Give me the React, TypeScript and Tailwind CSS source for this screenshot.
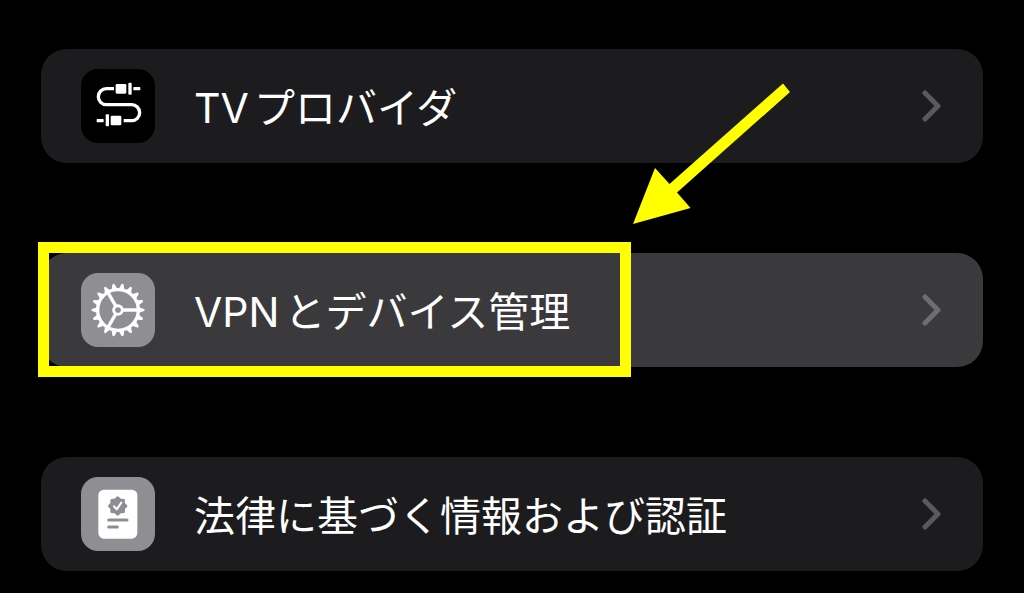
import type { ReactNode } from "react";

function CableIcon() {
  return (
    <svg viewBox="35 28 222 222" className="size-full" aria-hidden="true">
      <path
        d="M134 87H111a24 24 0 0 0 0 48h76a24 24 0 0 1 0 48h-24"
        fill="none"
        stroke="#fff"
        strokeWidth="10"
      />
      <g fill="#fff">
        <rect x="139" y="73" width="32" height="29" rx="4" />
        <rect x="177" y="69" width="10" height="36" rx="3" />
        <rect x="192" y="82" width="21" height="10" rx="2" />
        <rect x="124" y="168" width="32" height="29" rx="4" />
        <rect x="109" y="164" width="10" height="36" rx="3" />
        <rect x="82" y="178" width="21" height="10" rx="2" />
      </g>
    </svg>
  );
}

const TEETH = Array.from({ length: 18 }, (_, i) => i * 20);

function GearIcon() {
  return (
    <svg viewBox="-111 -111 222 222" className="size-full" aria-hidden="true">
      <g fill="#fff">
        {TEETH.map((angle) => (
          <path
            key={angle}
            d="M60 -10L67 -7L76 -4Q80 -3 80 0Q80 3 76 4L67 7L60 10Z"
            transform={`rotate(${angle})`}
          />
        ))}
      </g>
      <g fill="none" stroke="#fff">
        <circle r="61" strokeWidth="10" />
        <circle r="13" strokeWidth="9" />
        {[0, 120, 240].map((angle) => (
          <path key={angle} d="M15 0H60" strokeWidth="10" transform={`rotate(${angle})`} />
        ))}
      </g>
    </svg>
  );
}

const LOBES = Array.from({ length: 8 }, (_, i) => i * 45);

function CertificateIcon() {
  return (
    <svg viewBox="35 28 222 222" className="size-full" aria-hidden="true">
      <rect x="87" y="66" width="117" height="147" rx="17" fill="#fff" />
      <g fill="#8e8e93" transform="translate(145 115)">
        <circle r="23" />
        {LOBES.map((angle) => (
          <path
            key={angle}
            d="M17 -13L27 -4Q31 0 27 4L17 13Z"
            transform={`rotate(${angle})`}
          />
        ))}
      </g>
      <path
        d="M134 116L142 125L156 105"
        fill="none"
        stroke="#fff"
        strokeWidth="6"
        strokeLinecap="round"
        strokeLinejoin="round"
      />
      <path d="M118 157H173M118 178H144" stroke="#8e8e93" strokeWidth="9" strokeLinecap="round" />
    </svg>
  );
}

function Chevron({ color }: { color: string }) {
  return (
    <svg viewBox="0 0 20 32" className={`h-8 w-5 shrink-0 ${color}`} fill="none" aria-hidden="true">
      <path
        d="M3 3L16 16L3 29"
        stroke="currentColor"
        strokeWidth="5"
        strokeLinecap="round"
        strokeLinejoin="round"
      />
    </svg>
  );
}

type RowProps = {
  label: string;
  icon: ReactNode;
  iconBg: string;
  rowBg?: string;
  chevron?: string;
};

function SettingsRow({
  label,
  icon,
  iconBg,
  rowBg = "bg-[#1c1c1e]",
  chevron = "text-[#5a5a5e]",
}: RowProps) {
  return (
    <button
      type="button"
      className={`flex w-full items-center gap-[39px] rounded-[26px] py-5 pr-[41px] pl-10 text-left ${rowBg}`}
    >
      <span className={`size-[74px] shrink-0 overflow-hidden rounded-[17px] ${iconBg}`}>{icon}</span>
      <span className="grow pt-1 text-[41px] leading-[60px] whitespace-nowrap text-white">{label}</span>
      <Chevron color={chevron} />
    </button>
  );
}

export default function App() {
  return (
    <main className="min-h-screen bg-black px-[41px] pt-[49px] pb-5 font-['Inter','Noto_Sans_CJK_JP',sans-serif] [text-autospace:normal]">
      <ul className="flex flex-col gap-[90px]">
        <li>
          <SettingsRow label="TVプロバイダ" icon={<CableIcon />} iconBg="bg-black" />
        </li>
        <li className="relative">
          <SettingsRow
            label="VPNとデバイス管理"
            icon={<GearIcon />}
            iconBg="bg-[#8e8e93]"
            rowBg="bg-[#3a3a3c]"
            chevron="text-[#6e6e72]"
          />
          <div className="pointer-events-none absolute -top-[11px] -bottom-[10px] -left-[3px] w-[593px] border-[11px] border-[#ffff00]" />
          <svg
            viewBox="0 0 158 142"
            className="pointer-events-none absolute -top-[170px] left-[592px] h-[142px] w-[158px]"
            aria-hidden="true"
          >
            <path d="M0 141L22 85L36.500 101L150 0.500L157 9L44 109.500L57.500 125Z" fill="#ffff00" />
          </svg>
        </li>
        <li>
          <SettingsRow
            label="法律に基づく情報および認証"
            icon={<CertificateIcon />}
            iconBg="bg-[#8e8e93]"
          />
        </li>
      </ul>
    </main>
  );
}
